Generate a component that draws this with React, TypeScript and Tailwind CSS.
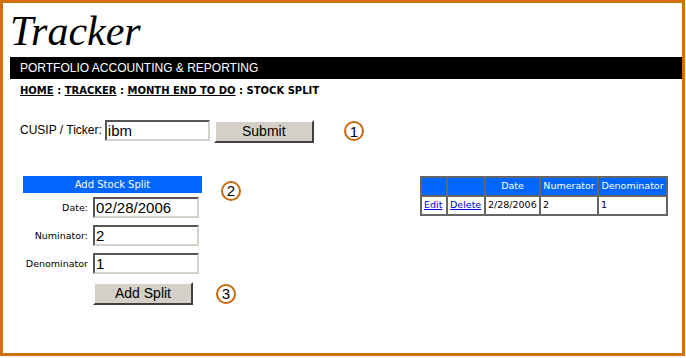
import React from "react";

const verdana = "font-['DejaVu_Sans',Verdana,sans-serif]";
const arial = "font-['Liberation_Sans',Arial,sans-serif]";

function Marker({ n }: { n: number }) {
  return (
    <span
      className={`flex h-[20px] w-[20px] items-center justify-center rounded-full border-2 border-[#c8680c] bg-white text-[15px] leading-none text-black ${arial}`}
    >
      {n}
    </span>
  );
}

function TextBox({ value, width = "w-[105px]" }: { value: string; width?: string }) {
  return (
    <div
      className={`${width} h-[21px] border-2 border-t-[#555] border-l-[#555] border-b-[#d4d0c8] border-r-[#d4d0c8] bg-white pl-[1px] text-[15px] leading-[17px] text-black ${arial}`}
    >
      {value}
    </div>
  );
}

function Button({ label }: { label: string }) {
  return (
    <button
      className={`h-[23px] w-[100px] border-2 border-t-white border-l-white border-b-[#404040] border-r-[#404040] bg-[#d4d0c8] text-[14px] leading-none text-black ${arial}`}
    >
      {label}
    </button>
  );
}

const rows = [{ date: "2/28/2006", num: "2", den: "1" }];

export default function App() {
  return (
    <div className="h-[358px] w-[686px] bg-white">
      <div className="flex h-[356px] w-[685px] flex-col border-[3px] border-[#d2700f] pl-[7px]">
        <h1 className="mt-[5px] h-[49px] font-['Liberation_Serif','Times_New_Roman',serif] text-[42px] italic leading-[46px] text-black">
          Tracker
        </h1>
        <div className={`flex h-[22px] items-center bg-black pl-[10px] text-[12px] text-white ${arial}`}>
          PORTFOLIO ACCOUNTING &amp; REPORTING
        </div>
        <div className={`mt-[5px] pl-[10px] text-[10px] font-bold leading-[13px] text-black ${verdana}`}>
          <a className="underline" href="#">HOME</a> : <a className="underline" href="#">TRACKER</a> :{" "}
          <a className="underline" href="#">MONTH END TO DO</a> : STOCK SPLIT
        </div>

        <div className="mt-[21px] flex items-center pl-[10px]">
          <span className={`text-[12px] text-black ${arial}`}>CUSIP / Ticker:</span>
          <div className="ml-[3px]">
            <TextBox value="ibm" width="w-[105px]" />
          </div>
          <div className="ml-[4px]">
            <Button label="Submit" />
          </div>
          <div className="ml-[30px] mt-[2px]">
            <Marker n={1} />
          </div>
        </div>

        <div className="mt-[33px] flex items-start">
          <div className="ml-[13px]">
            <div className="flex items-start">
              <div className={`flex h-[17px] w-[179px] items-center justify-center bg-[#0066ff] text-[10px] text-white ${verdana}`}>
                Add Stock Split
              </div>
              <div className="ml-[19px] mt-[5px]">
                <Marker n={2} />
              </div>
            </div>
            <div className="mt-[-4px] flex flex-col gap-[7px]">
              {[
                ["Date:", "02/28/2006"],
                ["Numinator:", "2"],
                ["Denominator", "1"],
              ].map(([label, value]) => (
                <div key={label} className="flex items-center">
                  <span className={`w-[70px] pr-[5px] text-right text-[9.5px] leading-[21px] text-black ${verdana}`}>{label}</span>
                  <TextBox value={value} width="w-[106px]" />
                </div>
              ))}
            </div>
            <div className="ml-[70px] mt-[8px] flex items-start">
              <Button label="Add Split" />
              <div className="ml-[23px] mt-[2px]">
                <Marker n={3} />
              </div>
            </div>
          </div>

          <table className={`ml-auto mr-[14px] w-[246px] table-fixed border-collapse border-2 border-[#666] text-[9.5px] ${verdana}`}>
            <thead>
              <tr className="h-[19px] bg-[#0066ff] text-white">
                <th className="w-[26px] border-2 border-[#666] font-normal"></th>
                <th className="w-[38px] border-2 border-[#666] font-normal"></th>
                <th className="w-[55px] border-2 border-[#666] px-[2px] text-center font-normal">Date</th>
                <th className="w-[58px] overflow-hidden whitespace-nowrap border-2 border-[#666] px-[1px] font-normal">Numerator</th>
                <th className="w-[69px] overflow-hidden whitespace-nowrap border-2 border-[#666] px-[1px] font-normal">Denominator</th>
              </tr>
            </thead>
            <tbody>
              {rows.map((r) => (
                <tr key={r.date} className="h-[19px] bg-white text-black">
                  <td className="border-2 border-[#666] px-[2px]">
                    <a className="text-[#0000ee] underline" href="#">Edit</a>
                  </td>
                  <td className="border-2 border-[#666] px-[2px]">
                    <a className="text-[#0000ee] underline" href="#">Delete</a>
                  </td>
                  <td className="whitespace-nowrap border-2 border-[#666] px-[2px]">{r.date}</td>
                  <td className="border-2 border-[#666] px-[2px]">{r.num}</td>
                  <td className="border-2 border-[#666] px-[2px]">{r.den}</td>
                </tr>
              ))}
            </tbody>
          </table>
        </div>
      </div>
    </div>
  );
}
